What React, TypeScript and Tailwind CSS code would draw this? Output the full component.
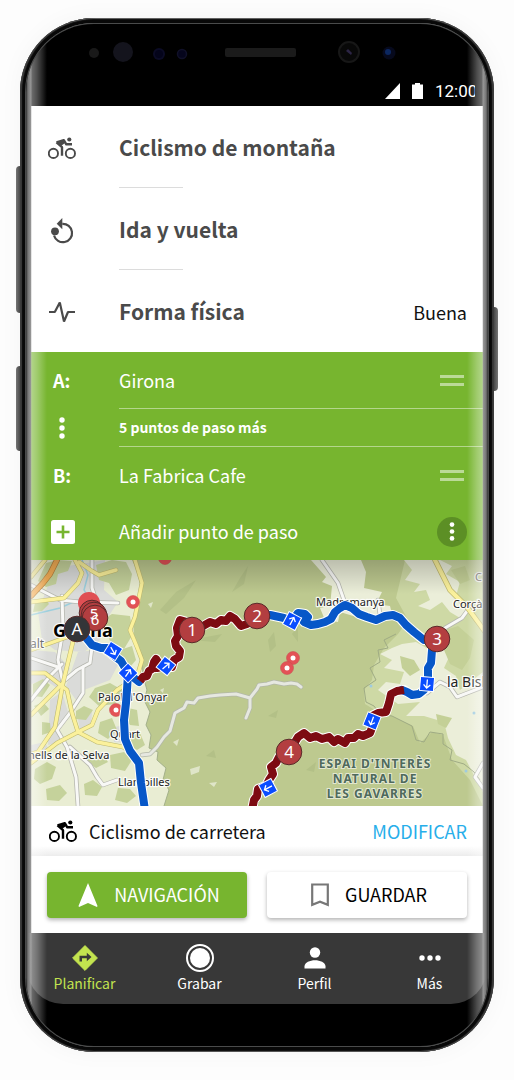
import React from "react";

const SANS = "font-['Noto_Sans_CJK_SC','Noto_Sans',sans-serif]";

function BikeIcon({ className = "" }: { className?: string }) {
  return (
    <svg viewBox="0 0 28 22" className={`h-[22px] w-7 ${className}`} aria-hidden="true">
      <circle cx="5.4" cy="16.4" r="4.600" fill="none" stroke="currentColor" strokeWidth="1.900" />
      <circle cx="22.400" cy="16.400" r="4.600" fill="none" stroke="currentColor" strokeWidth="1.900" />
      <circle cx="21.300" cy="2.500" r="2.100" fill="currentColor" />
      <path
        d="M8.500 5.400 14 10.200V18.800M8.500 5.400 15.800 3.200 18.300 7.300H24"
        fill="none"
        stroke="currentColor"
        strokeWidth="2.400"
        strokeLinejoin="round"
      />
      <path d="M8.500 5.400 16 3.200 17 6 13 9z" fill="currentColor" />
    </svg>
  );
}

function LoopIcon() {
  return (
    <svg viewBox="0 0 24 28" className="h-7 w-6" aria-hidden="true">
      <path d="M12.300 7.800A9.200 9.200 0 1 1 4 19.500" fill="none" stroke="currentColor" strokeWidth="2.200" />
      <path d="M12.300 2v11.300L6.700 7.700z" fill="currentColor" />
      <circle cx="5" cy="15.300" r="3.900" fill="currentColor" />
    </svg>
  );
}

function PulseIcon() {
  return (
    <svg viewBox="0 0 26 24" className="h-6 w-[26px]" aria-hidden="true">
      <path
        d="M0 12h5.800L10.800 2.500 15 21.500 19 12h7"
        fill="none"
        stroke="currentColor"
        strokeWidth="2.200"
        strokeLinejoin="bevel"
      />
    </svg>
  );
}

function Dots({ className = "" }: { className?: string }) {
  return (
    <svg viewBox="0 0 6 22" className={`w-1.5 ${className}`} fill="currentColor" aria-hidden="true">
      <circle cx="3" cy="3" r="2.700" />
      <circle cx="3" cy="11" r="2.700" />
      <circle cx="3" cy="19" r="2.700" />
    </svg>
  );
}

function OptionRow({
  icon,
  label,
  value,
  divider,
}: {
  icon: React.ReactNode;
  label: string;
  value?: string;
  divider?: boolean;
}) {
  return (
    <li className="flex h-[82px] pr-4 pl-4">
      <span className="flex w-[72px] items-center pt-0.5 text-[#4a4a4a]">
        <span className="flex w-[30px] justify-center">{icon}</span>
      </span>
      <div className="flex grow flex-col">
        <div className="flex grow items-center justify-between pt-0.5">
          <span className="text-[21px] font-bold text-[#4a4a4a]">{label}</span>
          {value && <span className="text-[18px] text-[#111]">{value}</span>}
        </div>
        {divider ? <div className="h-px w-16 bg-[#dcdcdc]" /> : null}
      </div>
    </li>
  );
}

function Handle({ label }: { label: string }) {
  return (
    <button aria-label={label} className="mr-[3px] flex h-4 w-6 flex-col justify-center gap-[5px]">
      <span className="h-[3px] w-full bg-white/50" />
      <span className="h-[3px] w-full bg-white/50" />
    </button>
  );
}

const whiteRoads = [
  "M92 560V588L97 603",
  "M62 596 63 630 58 660 63 683",
  "M31 658 58 667",
  "M92 647 90 663 77 670 65 680",
  "M83 667V693L70 713 57 730 67 747 76 777 78 806",
  "M70 747 90 765 97 777 103 785 117 780",
  "M31 700 50 676 62 664",
  "M31 585 60 600 80 602 118 603",
  "M322 560 338 583 345 603",
  "M378 600 380 615",
  "M445 628 462 618 470 607",
  "M427 693 440 682 450 687 457 697 483 687",
  "M483 763 475 777 483 788",
];

const yellowRoads = [
  "M75 560 82 573 78 583 64 598 31 602",
  "M79 562 92 571 99 575 116 570",
  "M135 560 142 583 135 617 130 630 137 647 142 660 137 677 117 690 98 710 92 725 78 732 57 743 31 763",
  "M31 673H45L67 690 72 713 78 732 97 742 123 747 132 753",
  "M75 633 63 683 55 727 38 752 31 754",
  "M31 650 70 636",
  "M45 560 31 577",
  "M31 715 62 684",
];

const trail =
  "M142 755 150 754 157 747 164 737 170 731 175 713 184 708 187 702 194 703 198 698 210 696 220 695 236 694 250 698 257 689 259 685 267 684 274 682 284 684 291 683 297 684 301 687M250 698 250 708 246 718";

const patches = [
  "M46 563l12-3 14 1-4 10-10 3-2 10-10 3-8-6z",
  "M96 565l16-5 14 2 6 12-3 16-13 5-7-12-10-3z",
  "M35 603l10-5 4 6-7 7-9 1z",
  "M102 620l10-6 18 2 3 18-9 15-14-8z",
  "M120 650l12-4 4 14-6 7-11-7z",
  "M33 684l10-5 7 6-8 12-9-1z",
  "M95 688l15-5 14 8-9 13-16 2-10-9z",
  "M34 706l9-4 6 7-8 7z",
  "M76 711l8-5 9 4-7 10-10-1z",
  "M42 722l8 1 1 9-9 3z",
  "M100 722l12-4 5 12-9 9-10-6z",
  "M128 708l9 2 2 16-9-1-6-9z",
  "M130 732l10 1 5 12-8 5-10-6z",
  "M35 769l12-7 9 5-4 12-12 5-6-5z",
  "M88 752l13 1 7 9-12 6-9-6z",
  "M110 755l14-3 8 8-7 11-14-3z",
  "M46 789l14-4 7 8-8 8-12-1z",
  "M84 784l9-4 9 7-5 9-12-1z",
  "M118 788l12 1 6 7-9 7-12-3z",
];

function Arrow({ x, y, tilt, dir }: { x: number; y: number; tilt: number; dir: number }) {
  return (
    <g transform={`translate(${x} ${y})`}>
      <rect x="-7" y="-7" width="14" height="14" fill="#0a4dff" stroke="#fff" strokeWidth="1" transform={`rotate(${tilt})`} />
      <path
        d="M0 4.500V-3.500M-3.400-.6 0-4 3.400-.6"
        fill="none"
        stroke="#fff"
        strokeWidth="1.300"
        transform={`rotate(${dir})`}
      />
    </g>
  );
}

function Marker({ x, y, text, fill = "#b33e40" }: { x: number; y: number; text?: string; fill?: string }) {
  return (
    <g>
      <circle cx={x} cy={y} r="12.800" fill={fill} stroke="#5a2a2a" strokeWidth="1" />
      {text ? (
        <text x={x} y={y + 6} textAnchor="middle" fontSize="17" fill="#fff" fontFamily="Noto Sans, sans-serif">
          {text}
        </text>
      ) : null}
    </g>
  );
}

const blueA = "M83 634 92 645 101 648 107 648 113 655 121 661 128 673 139 682";
const blueSouth = "M128 673 127 690 126 703 124 720 125 739 130 751 139 763 141 783 145 810";
const redA =
  "M140 681 143 677 147 676 149 671 152 669 154 662 156 659 158 662 157 668 165 666 172 667 174 660 179 657 180 651 176 646 175 641 178 636 177 628 180 620 187 622 192 629 203 626 210 622 216 624 221 620 226 621 230 616 235 619 241 626 247 624 255 617";
const blueB =
  "M257 616 270 615 284 618 292 621 298 613 305 614 308 617 304 622 311 625 318 624 325 622 331 619 335 612 340 608 345 605 352 608 359 614 367 617 376 620 385 616 393 615 400 618 406 625 414 632 424 640 437 639 432 650 431 663 428 668 428 683 424 690 419 694 412 695 407 692 402 690";
const redB =
  "M404 690 397 691 391 694 389 703 386 712 378 713 372 716 373 725 370 733 363 736 358 734 354 738 348 738 345 743 338 739 334 742 329 737 322 739 316 736 310 738 304 733 298 737 289 752 279 757 276 763 271 767 273 774 269 780 266 786 258 789 257 796 254 800 252 810";

function RouteMap() {
  const label = {
    fontFamily: "Noto Sans, sans-serif",
    stroke: "#ffffff",
    strokeWidth: 2.5,
    strokeOpacity: 0.85,
    paintOrder: "stroke" as const,
    strokeLinejoin: "round" as const,
  };
  return (
    <svg
      viewBox="31 560 452 246"
      preserveAspectRatio="xMidYMid slice"
      className="block h-[246px] w-full"
      role="img"
      aria-label="Mapa de la ruta"
    >
      <defs>
        <linearGradient id="mapShade" x1="0" y1="0" x2="0" y2="1">
          <stop offset="0" stopColor="#000" stopOpacity="0.2" />
          <stop offset="1" stopColor="#000" stopOpacity="0" />
        </linearGradient>
      </defs>
      <rect x="31" y="560" width="452" height="246" fill="#bdc98f" />

      <path
        fill="#e9edd3"
        d="M31 560H132L139 575 141 600 133 618 134 640 142 655 143 676 147 690 144 700 150 712 146 725 151 735 149 748 158 752 157 760 166 768 163 780 169 790 164 806H31z"
      />
      <path
        d="M134 640 142 655 143 676 147 690 144 700 150 712 146 725 151 735 149 748 158 752 157 760 166 768 163 780 169 790 164 806"
        fill="none"
        stroke="#a3b08a"
      />
      <g fill="#dadbd9">
        <path d="M52 575 68 566 105 560 104 590 118 602 110 614 100 640 84 652 55 650 42 640 38 612z" />
        <path d="M31 650 55 652 70 668 60 690 45 680 31 684z" />
        <path d="M78 652 97 650 118 665 110 680 84 690 76 700 66 686z" />
        <path d="M50 700 62 692 68 712 58 728 62 742 48 745z" />
        <path d="M77 714 92 712 91 726 80 730z" />
        <path d="M112 728 126 724 128 743 114 742z" />
        <path d="M31 745 45 742 50 753 31 762z" />
      </g>
      <g fill="#c5d29b">
        {patches.map((d) => (
          <path key={d} d={d} />
        ))}
      </g>

      <path
        fill="#ced9a5"
        d="M405 560H483V806L470 780 452 760 443 735 432 732 420 743 413 726 392 716 378 712 365 704 364 690 372 680 374 665 384 648 398 634 408 620 396 598z"
      />
      <path
        fill="#ebeed9"
        d="M311 560 326 577 322 582 332 586 330 606 320 608 325 620 338 622 340 612 360 618 392 614 390 606 376 604 382 592 364 588 366 572 361 560zM404 560 412 570 405 580 420 584 414 592 426 590 430 600 418 606 430 610 442 602 450 612 460 618 470 610 456 596 460 582 446 574 452 566 440 560zM402 644 416 642 430 650 445 640 450 655 444 668 456 676 460 690 483 672V792L466 760 456 755 448 738 444 722 424 716 406 716 420 702 398 704 378 690 386 682 400 684 404 672 384 668 392 660 380 654 392 648z"
      />
      <path
        fill="#c4d097"
        d="M446 630 458 626 474 640 470 658 462 670 450 664 444 650zM400 656 414 660 420 670 410 676 402 668zM436 714 452 718 446 728 438 724zM451 570 465 566 470 580 460 584z"
      />
      <path
        d="M396 634 384 640 388 648 378 650 380 662 370 668 376 680 364 688 366 702 374 706 380 714 392 716 400 720 412 726 416 740 424 742 430 732 443 734 443 744 452 750 450 760 464 764 474 772 480 780"
        fill="none"
        stroke="#9fab84"
      />
      <g fill="#b3c087">
        <path d="M160 610 176 592 196 580 184 598 166 614z" />
        <path d="M232 592 240 578 248 566 244 584z" />
        <path d="M268 640 274 632 276 646 270 652zM292 634 298 626 298 642z" />
        <path d="M170 660 184 650 180 660zM206 756 214 750 216 758z" />
        <path d="M190 640 222 634 215 642zM268 716 278 710 276 718zM306 770 316 762 314 772z" />
      </g>
      <path
        fill="#dfe5c8"
        d="M190 769 200 766 199 772 191 775zM209 783 217 782 214 787zM173 742 179 739 177 746zM148 604 153 602 151 608zM160 690 164 688 163 693z"
      />
      <g fill="#9fcbe0">
        <circle cx="371" cy="686" r="1.500" />
        <circle cx="474" cy="713" r="1.500" />
        <circle cx="466" cy="771" r="1.500" />
      </g>
      <path d="M82 560 88 575 84 590 92 603M31 615 60 608 78 600" fill="none" stroke="#9ccfdd" strokeWidth="1.500" />

      <g fill="none" strokeLinejoin="round" strokeLinecap="round">
        <g stroke="#b5b6ae" strokeWidth="4.500">
          {whiteRoads.map((d) => (
            <path key={d} d={d} />
          ))}
        </g>
        <g stroke="#f8f8f6" strokeWidth="3">
          {whiteRoads.map((d) => (
            <path key={d} d={d} />
          ))}
        </g>
        <g stroke="#bdb870" strokeWidth="4.500">
          {yellowRoads.map((d) => (
            <path key={d} d={d} />
          ))}
          <path d="M435 560 450 590 467 607 486 633" strokeWidth="5.500" />
        </g>
        <g stroke="#fbf19b" strokeWidth="3.400">
          {yellowRoads.map((d) => (
            <path key={d} d={d} />
          ))}
          <path d="M435 560 450 590 467 607 486 633" strokeWidth="4" />
        </g>
        <path d="M57 560 50 574 43 583 31 596" stroke="#b6803c" strokeWidth="6" />
        <path d="M57 560 50 574 43 583 31 596" stroke="#f2ad55" strokeWidth="4.500" />
        <path d={trail} stroke="#b3b8a8" strokeWidth="4.500" />
        <path d={trail} stroke="#e6e8e0" strokeWidth="3" />
      </g>

      <g fill="#e35256" stroke="#c9484c" strokeWidth="0.500">
        <circle cx="165" cy="558" r="6.500" />
        <circle cx="133" cy="602" r="6.500" />
        <circle cx="116" cy="710" r="6.500" />
        <circle cx="293" cy="658" r="6.500" />
        <circle cx="287" cy="668" r="6.500" />
      </g>
      <g fill="#fff">
        <circle cx="133" cy="602" r="2.500" />
        <circle cx="116" cy="710" r="2.500" />
        <circle cx="293" cy="658" r="2.500" />
        <circle cx="287" cy="668" r="2.500" />
      </g>

      <g {...label} fontSize="11" fill="#222">
        <text x="98" y="701">Palol d'Onyar</text>
        <text x="110" y="738">Quart</text>
        <text x="28" y="759" fontSize="11">nells de la Selva</text>
        <text x="118" y="786">Llambilles</text>
        <text x="316" y="606">Madremanya</text>
        <text x="453" y="608">Corçà</text>
        <text x="475" y="581" fill="#666">C</text>
        <text x="447" y="687" fontSize="14">la Bisb</text>
        <text x="30" y="648" fontSize="12" fill="#555">alt</text>
        <text x="53" y="637" fontSize="18" fontWeight="700" fill="#000">Girona</text>
      </g>

      <g fill="none" strokeLinejoin="round" strokeLinecap="round">
        <g stroke="#fff" strokeWidth="10">
          <path d={blueA} />
          <path d={blueSouth} />
          <path d={redA} />
          <path d={blueB} />
          <path d={redB} />
        </g>
        <g stroke="#0757c8" strokeWidth="8">
          <path d={blueA} />
          <path d={blueSouth} />
          <path d={blueB} />
        </g>
        <g stroke="#7d0b12" strokeWidth="8" strokeLinecap="butt">
          <path d={redA} />
          <path d={redB} />
        </g>
      </g>

      <Arrow x={113} y={651} tilt={32} dir={150} />
      <Arrow x={128} y={673} tilt={45} dir={35} />
      <Arrow x={166} y={666} tilt={38} dir={50} />
      <Arrow x={292} y={621} tilt={28} dir={28} />
      <Arrow x={427} y={684} tilt={5} dir={185} />
      <Arrow x={372} y={721} tilt={22} dir={200} />
      <Arrow x={268} y={788} tilt={-28} dir={242} />

      <circle cx="89" cy="603" r="11" fill="#e04f54" />
      <Marker x={92} y={613} />
      <Marker x={94} y={615} />
      <Marker x={95} y={618} />
      <g fontFamily="Noto Sans, sans-serif" fontSize="15" fill="#fff" textAnchor="middle">
        <text x="94" y="619">5</text>
        <text x="95" y="625">6</text>
      </g>
      <Marker x={192} y={630} text="1" />
      <Marker x={257} y={616} text="2" />
      <Marker x={437} y={639} text="3" />
      <Marker x={289} y={752} text="4" />
      <Marker x={77} y={629} text="A" fill="#333538" />

      <g
        fontFamily="Noto Sans, sans-serif"
        fontSize="12"
        fontWeight="700"
        fill="#4f6a5c"
        textAnchor="middle"
        letterSpacing="1"
        stroke="#e3e8d2"
        strokeWidth="2"
        paintOrder="stroke"
      >
        <text x="375" y="768">ESPAI D'INTERÈS</text>
        <text x="375" y="783">NATURAL DE</text>
        <text x="375" y="798">LES GAVARRES</text>
      </g>
      <rect x="31" y="560" width="452" height="34" fill="url(#mapShade)" />
    </svg>
  );
}

function NavItem({ icon, label, active }: { icon: React.ReactNode; label: string; active?: boolean }) {
  return (
    <a
      href="#"
      aria-current={active ? "page" : undefined}
      className={`flex flex-1 flex-col items-center pt-2.5 text-[14px] leading-5 ${active ? "text-[#c3e34f]" : "text-white"}`}
    >
      <span className="flex h-[30px] items-center">{icon}</span>
      {label}
    </a>
  );
}

export default function App() {
  return (
    <div className={`min-h-screen bg-[#fdfdfd] pt-[18px] pb-7 ${SANS}`}>
      <div className="relative mx-5">
        <span className="absolute top-[148px] -left-1 h-[147px] w-2 rounded-l-sm bg-linear-to-r from-[#777] to-[#222]" />
        <span className="absolute top-[348px] -left-1 h-[85px] w-2 rounded-l-sm bg-linear-to-r from-[#777] to-[#222]" />
        <span className="absolute top-[289px] -right-1 h-[84px] w-2 rounded-r-sm bg-linear-to-l from-[#777] to-[#222]" />

        <div className="relative rounded-[74px] bg-[#080808] p-1.5 shadow-[inset_2px_0_1px_#3c3c3c,inset_-2px_0_1px_#3c3c3c,inset_0_1px_1px_#777,inset_0_-1px_1px_#666,0_0_24px_rgba(0,0,0,0.04)]">
          <div className="relative overflow-hidden rounded-[68px] bg-black px-[5px] shadow-[0_0_0_1px_#4a4b4b,0_-1px_0_#777,0_1px_0_#777]">
            <header className="flex h-[82px] flex-col justify-between">
              <svg viewBox="0 0 452 44" className="h-11 w-full" aria-hidden="true">
                <circle cx="63" cy="29" r="5" fill="#191919" />
                <circle cx="92" cy="28" r="10" fill="#14141d" />
                <circle cx="128" cy="30" r="6" fill="#0b0b25" />
                <circle cx="128" cy="30" r="4" fill="#04041a" />
                <circle cx="151" cy="30" r="4.500" fill="#05051c" stroke="#101028" strokeWidth="1.500" />
                <rect x="194" y="24" width="71" height="9" rx="2" fill="#1b1b1b" />
                <circle cx="318" cy="28" r="10" fill="#080808" stroke="#171717" strokeWidth="2" />
                <path d="m315 27 2-2 4 4-1 2z" fill="#2c2545" />
                <circle cx="358" cy="29" r="6.500" fill="#06091c" />
                <circle cx="357" cy="28" r="3" fill="#0b2760" />
              </svg>
              <div className="flex items-center justify-end gap-3 pr-2 pb-1">
                <svg viewBox="0 0 15 16" className="h-4 w-[15px]" aria-hidden="true">
                  <path d="M15 0v16H0z" fill="#fff" />
                </svg>
                <svg viewBox="0 0 11 16" className="h-4 w-[11px]" aria-hidden="true">
                  <path d="M0 1.500h3V0h5v1.500h3V16H0z" fill="#fff" />
                </svg>
                <time className="w-10 overflow-hidden font-['Roboto',sans-serif] text-[17px] leading-[22px] text-white">12:00</time>
              </div>
            </header>

            <main>
              <ul className="bg-white">
                <OptionRow icon={<BikeIcon />} label="Ciclismo de montaña" divider />
                <OptionRow icon={<LoopIcon />} label="Ida y vuelta" divider />
                <OptionRow icon={<PulseIcon />} label="Forma física" value="Buena" />
              </ul>

              <section className="bg-[#77b52f] pl-4 text-[18px] text-white">
                <div className="flex h-14 items-center">
                  <span className="w-[72px] pl-1.5 font-bold">A:</span>
                  <span className="grow">Girona</span>
                  <span className="pr-4">
                    <Handle label="Mover Girona" />
                  </span>
                </div>
                <div className="flex h-[39px] items-center">
                  <span className="flex w-[72px] shrink-0 pl-3">
                    <Dots className="h-[22px]" />
                  </span>
                  <button className="h-full grow border-t border-b border-white/45 text-left text-[14px] font-bold">
                    5 puntos de paso más
                  </button>
                </div>
                <div className="flex h-14 items-center">
                  <span className="w-[72px] pl-1.5 font-bold">B:</span>
                  <span className="grow">La Fabrica Cafe</span>
                  <span className="pr-4">
                    <Handle label="Mover La Fabrica Cafe" />
                  </span>
                </div>
                <div className="flex h-[57px] items-center">
                  <button className="flex grow items-center text-left">
                    <span className="flex w-[72px] pl-1">
                      <svg viewBox="0 0 24 24" className="h-6 w-6" aria-hidden="true">
                        <rect width="24" height="24" rx="2.500" fill="#fff" />
                        <path d="M12 5.500v13M5.500 12h13" stroke="#77b52f" strokeWidth="2.600" />
                      </svg>
                    </span>
                    Añadir punto de paso
                  </button>
                  <button
                    aria-label="Más opciones"
                    className="mr-4 flex h-[30px] w-[30px] items-center justify-center rounded-full bg-[#5c8f25]"
                  >
                    <Dots className="h-[19px]" />
                  </button>
                </div>
              </section>

              <RouteMap />

              <section className="flex h-[50px] items-center bg-linear-to-b from-white from-80% to-[#ececec] px-4 text-[18px] text-[#111]">
                <BikeIcon className="ml-0.5 text-black" />
                <span className="grow pl-3">Ciclismo de carretera</span>
                <button className="text-[#27aeea]">MODIFICAR</button>
              </section>

              <section className="grid h-[77px] grid-cols-2 items-center gap-5 bg-white px-4 text-[18px]">
                <button className="flex h-[46px] items-center justify-center gap-4 rounded-sm bg-[#77b52f] pl-1 text-white shadow-[0_2px_4px_rgba(0,0,0,0.3)]">
                  <svg viewBox="0 0 20 24" className="h-6 w-5" aria-hidden="true">
                    <path d="M10 0 19.500 23 19 24 10 20 1 24 .5 23z" fill="#fff" />
                  </svg>
                  NAVIGACIÓN
                </button>
                <button className="flex h-[46px] items-center justify-center gap-4 rounded-sm bg-white pl-1 text-black shadow-[0_2px_4px_rgba(0,0,0,0.3)]">
                  <svg viewBox="0 0 18 24" className="h-6 w-[18px]" aria-hidden="true">
                    <path d="M1.200 1.500h15.600v20.300L9 18.700l-7.800 3.100z" fill="none" stroke="#777" strokeWidth="2.200" />
                  </svg>
                  GUARDAR
                </button>
              </section>
            </main>

            <nav className="-mx-1 flex h-[71px] rounded-b-[36px] bg-[#383838]">
              <NavItem
                active
                label="Planificar"
                icon={
                  <svg viewBox="0 0 26 26" className="h-[26px] w-[26px]" aria-hidden="true">
                    <path d="M13 .6 25.400 13 13 25.400.6 13z" fill="#c3e34f" stroke="#c3e34f" strokeLinejoin="round" />
                    <path d="M7.500 16.500v-5.700h7.300V7.800l4.700 4.300-4.700 4.200v-3.100H10v3.300z" fill="#383838" />
                  </svg>
                }
              />
              <NavItem
                label="Grabar"
                icon={
                  <svg viewBox="0 0 28 28" className="h-7 w-7" aria-hidden="true">
                    <circle cx="14" cy="14" r="13" fill="none" stroke="#fff" strokeWidth="2" />
                    <circle cx="14" cy="14" r="10" fill="#fff" />
                  </svg>
                }
              />
              <NavItem
                label="Perfil"
                icon={
                  <svg viewBox="0 0 22 22" className="h-[22px] w-[22px]" aria-hidden="true">
                    <circle cx="11" cy="5.500" r="5.200" fill="#fff" />
                    <path d="M.5 21.500v-2.300c0-3.800 5.500-6 10.500-6s10.500 2.200 10.500 6v2.300z" fill="#fff" />
                  </svg>
                }
              />
              <NavItem
                label="Más"
                icon={
                  <svg viewBox="0 0 22 6" className="h-1.5 w-[22px]" fill="#fff" aria-hidden="true">
                    <circle cx="3" cy="3" r="2.700" />
                    <circle cx="11" cy="3" r="2.700" />
                    <circle cx="19" cy="3" r="2.700" />
                  </svg>
                }
              />
            </nav>
            <div className="h-[42px]" />

            <span className="pointer-events-none absolute inset-y-0 left-0 w-[21px] bg-[linear-gradient(90deg,#333_0,#777_2px,rgba(190,190,190,0.8)_5px,rgba(255,255,255,0.42)_6px,rgba(255,255,255,0.3)_11px,transparent_21px)]" />
            <span className="pointer-events-none absolute inset-y-0 right-0 w-[21px] bg-[linear-gradient(270deg,#333_0,#777_2px,rgba(190,190,190,0.8)_5px,rgba(255,255,255,0.42)_6px,rgba(255,255,255,0.3)_11px,transparent_21px)]" />
          </div>
        </div>
      </div>
    </div>
  );
}
